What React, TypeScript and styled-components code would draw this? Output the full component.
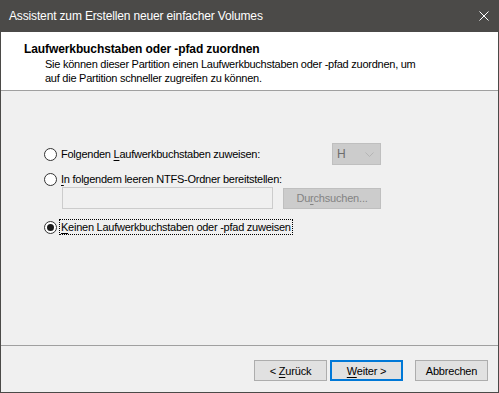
import React from "react";
import styled, { createGlobalStyle } from "styled-components";

const GlobalStyle = createGlobalStyle`
  html, body {
    margin: 0;
    padding: 0;
    background: #ffffff;
  }
  body {
    font-family: "Liberation Sans", Arial, sans-serif;
    font-size: 11px;
    letter-spacing: -0.25px;
    color: #000;
  }
`;

const Window = styled.div`
  width: 499px;
  height: 393px;
  box-sizing: border-box;
  border: 1px solid #4b4a48;
  border-top: none;
  display: flex;
  flex-direction: column;
  background: #f0f0f0;
`;

const TitleBar = styled.div`
  height: 31px;
  flex: none;
  background: #4b4a48;
  color: #fff;
  display: flex;
  align-items: center;
  justify-content: space-between;
  padding: 0 9px 1px 9px;
  font-size: 12px;
  letter-spacing: -0.15px;
  margin: 0 -1px;
`;

const CloseIcon = styled.svg`
  width: 10px;
  height: 10px;
  margin-right: 1px;
`;

const Header = styled.div`
  height: 59px;
  flex: none;
  background: #fff;
  border-bottom: 1px solid #a0a0a0;
  box-sizing: border-box;
  padding: 10px 0 0 23px;
`;

const HeaderTitle = styled.div`
  font-weight: bold;
  font-size: 12px;
  letter-spacing: -0.1px;
  line-height: 14px;
`;

const HeaderText = styled.div`
  padding-left: 21px;
  line-height: 14px;
  margin-top: 1px;
`;

const Body = styled.div`
  flex: 1;
  padding: 52px 0 0 43px;
`;

const Options = styled.div`
  width: 337px;
  display: flex;
  flex-direction: column;
`;

const Row = styled.div<{ $mt?: number }>`
  display: flex;
  align-items: center;
  justify-content: space-between;
  margin-top: ${(p) => p.$mt ?? 0}px;
`;

const RadioLabel = styled.label`
  display: flex;
  align-items: center;
  gap: 4px;
`;

const RadioCircle = styled.span<{ $checked?: boolean }>`
  width: 13px;
  height: 13px;
  box-sizing: border-box;
  border: 1px solid #333;
  border-radius: 50%;
  background: #fff;
  display: flex;
  align-items: center;
  justify-content: center;
  flex: none;
  &::after {
    content: "";
    width: 7px;
    height: 7px;
    border-radius: 50%;
    background: ${(p) => (p.$checked ? "#1a1a1a" : "transparent")};
  }
`;

const LabelText = styled.span<{ $focused?: boolean }>`
  line-height: 14px;
  outline: ${(p) => (p.$focused ? "1px dotted #000" : "none")};
  outline-offset: 0px;
  padding: ${(p) => (p.$focused ? "0 1px" : "0")};
  margin-left: ${(p) => (p.$focused ? "-1px" : "0")};
`;

const Key = styled.span`
  text-decoration: underline;
  text-underline-offset: 2px;
`;

const Combo = styled.div`
  width: 49px;
  height: 22px;
  box-sizing: border-box;
  background: #cccccc;
  border: 1px solid #bfbfbf;
  color: #6d6d6d;
  font-size: 12px;
  display: flex;
  align-items: center;
  justify-content: space-between;
  padding: 0 6px 0 4px;
`;

const FolderRow = styled.div`
  display: flex;
  align-items: center;
  justify-content: space-between;
  padding-left: 18px;
  margin-top: 1px;
`;

const PathField = styled.div`
  width: 211px;
  height: 22px;
  box-sizing: border-box;
  border: 1px solid #cccccc;
  background: #f0f0f0;
`;

const Button = styled.button<{ $disabled?: boolean; $default?: boolean }>`
  width: 73px;
  height: 21px;
  box-sizing: border-box;
  font-family: "Liberation Sans", Arial, sans-serif;
  font-size: 11px;
  letter-spacing: -0.2px;
  padding: 0;
  border: ${(p) =>
    p.$default ? "2px solid #0078d7" : p.$disabled ? "1px solid #bfbfbf" : "1px solid #adadad"};
  background: ${(p) => (p.$disabled ? "#cccccc" : "#e1e1e1")};
  color: ${(p) => (p.$disabled ? "#838383" : "#000")};
  border-radius: 0;
  cursor: default;
`;

const BrowseButton = styled(Button)`
  width: 98px;
`;

const Footer = styled.div`
  height: 47px;
  flex: none;
  box-sizing: border-box;
  border-top: 1px solid #a0a0a0;
  display: flex;
  justify-content: flex-end;
  align-items: flex-start;
  padding: 14px 10px 0 0;
`;

const NavGroup = styled.div`
  display: flex;
  gap: 3px;
  margin-right: 12px;
`;

export default function App() {
  return (
    <>
      <GlobalStyle />
      <Window>
        <TitleBar>
          <span>Assistent zum Erstellen neuer einfacher Volumes</span>
          <CloseIcon viewBox="0 0 10 10">
            <path d="M0.5 0.5 L9.5 9.5 M9.5 0.5 L0.5 9.5" stroke="#fff" strokeWidth="1" />
          </CloseIcon>
        </TitleBar>
        <Header>
          <HeaderTitle>Laufwerkbuchstaben oder -pfad zuordnen</HeaderTitle>
          <HeaderText>
            Sie können dieser Partition einen Laufwerkbuchstaben oder -pfad zuordnen, um
            <br />
            auf die Partition schneller zugreifen zu können.
          </HeaderText>
        </Header>
        <Body>
          <Options>
            <Row>
              <RadioLabel>
                <RadioCircle />
                <LabelText>
                  Folgenden <Key>L</Key>aufwerkbuchstaben zuweisen:
                </LabelText>
              </RadioLabel>
              <Combo>
                <span>H</span>
                <svg width="9" height="5" viewBox="0 0 9 5">
                  <path d="M0.5 0.5 L4.5 4.5 L8.5 0.5" fill="none" stroke="#b5b5b5" strokeWidth="1" />
                </svg>
              </Combo>
            </Row>
            <Row $mt={7}>
              <RadioLabel>
                <RadioCircle />
                <LabelText>
                  <Key>I</Key>n folgendem leeren NTFS-Ordner bereitstellen:
                </LabelText>
              </RadioLabel>
            </Row>
            <FolderRow>
              <PathField />
              <BrowseButton $disabled>
                Du<Key>r</Key>chsuchen...
              </BrowseButton>
            </FolderRow>
            <Row $mt={11}>
              <RadioLabel>
                <RadioCircle $checked />
                <LabelText $focused>
                  <Key>K</Key>einen Laufwerkbuchstaben oder -pfad zuweisen
                </LabelText>
              </RadioLabel>
            </Row>
          </Options>
        </Body>
        <Footer>
          <NavGroup>
            <Button>
              &lt; <Key>Z</Key>urück
            </Button>
            <Button $default>
              <Key>W</Key>eiter &gt;
            </Button>
          </NavGroup>
          <Button>Abbrechen</Button>
        </Footer>
      </Window>
    </>
  );
}
